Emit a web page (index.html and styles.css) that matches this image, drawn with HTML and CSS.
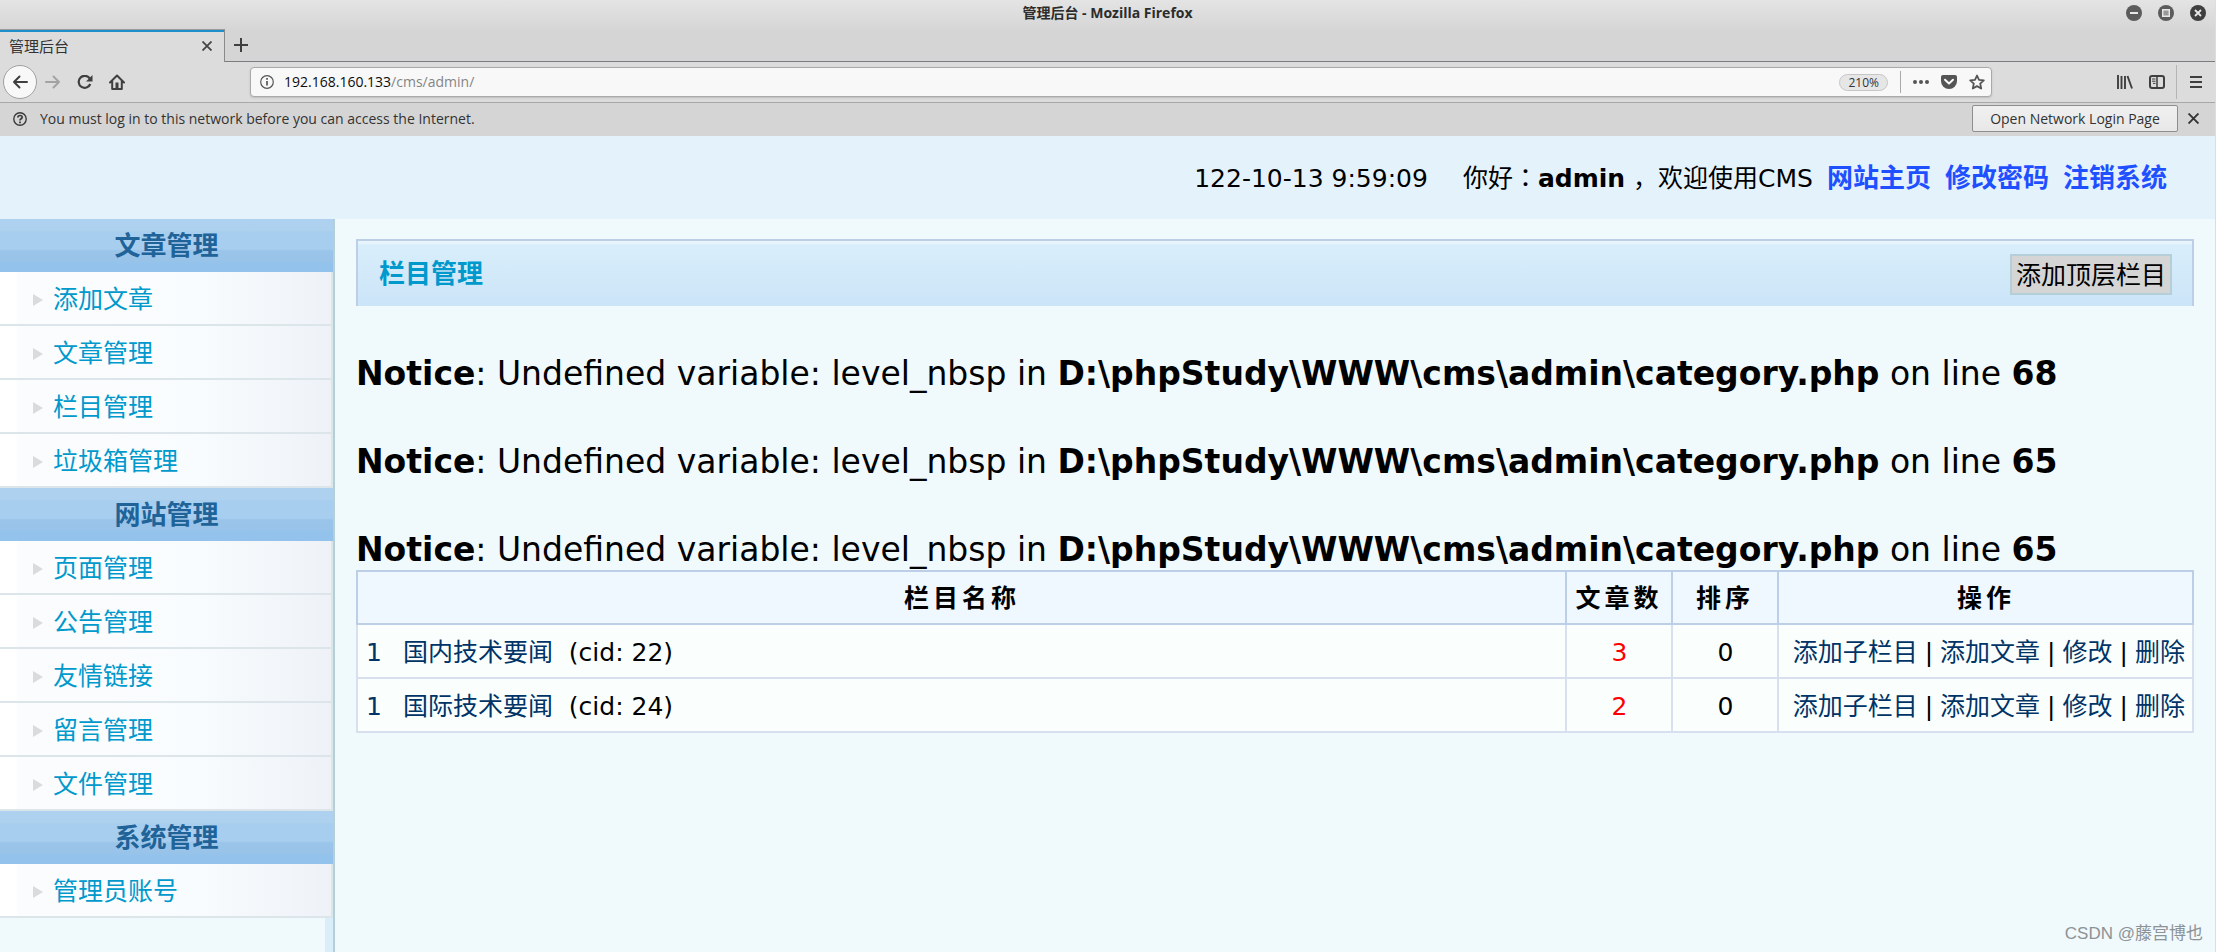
FILE: index.html
```html
<!DOCTYPE html>
<html lang="zh-CN">
<head>
<meta charset="utf-8">
<title>管理后台</title>
<link rel="stylesheet" href="styles.css">
</head>
<body>
<div class="window">
  <header class="chrome">
    <div class="titlebar">
      <span class="window-title">管理后台 - Mozilla Firefox</span>
      <div class="window-buttons">
        <button class="icon-btn" aria-label="Minimize"><svg width="16" height="16" viewBox="0 0 16 16"><circle cx="8" cy="8" r="8" fill="#5c5c5c"/><path d="M4 8h8" stroke="#e8e8e8" stroke-width="2"/></svg></button>
        <button class="icon-btn" aria-label="Maximize"><svg width="16" height="16" viewBox="0 0 16 16"><circle cx="8" cy="8" r="8" fill="#5c5c5c"/><path d="M4.700 4.700h6.600v6.600h-6.600z" fill="#999" stroke="#e8e8e8" stroke-width="1.400"/></svg></button>
        <button class="icon-btn" aria-label="Close"><svg width="16" height="16" viewBox="0 0 16 16"><circle cx="8" cy="8" r="8" fill="#3f3f3f"/><path d="M5 5l6 6M11 5l-6 6" stroke="#e8e8e8" stroke-width="1.800"/></svg></button>
      </div>
    </div>
    <div class="tabs">
      <div class="tab"><span>管理后台</span>
        <button class="icon-btn" aria-label="Close tab"><svg width="10" height="10" viewBox="0 0 10 10"><path d="M.5.500l9 9M9.500.500l-9 9" stroke="#444" stroke-width="1.800"/></svg></button>
      </div>
      <div class="tab-rest"><button class="icon-btn" aria-label="New tab"><svg width="14" height="14" viewBox="0 0 14 14"><path d="M7 0v14M0 7h14" stroke="#3f3f3f" stroke-width="2"/></svg></button></div>
    </div>
    <div class="toolbar">
      <div class="nav">
        <button class="back" aria-label="Back"><svg width="16" height="14" viewBox="0 0 16 14"><path d="M15 7H2M7.500 1.500L2 7l5.500 5.500" fill="none" stroke="#3f3f3f" stroke-width="2" stroke-linecap="round" stroke-linejoin="round"/></svg></button>
        <button class="icon-btn" aria-label="Forward"><svg width="16" height="14" viewBox="0 0 16 14"><path d="M1 7h13M8.500 1.500L14 7l-5.500 5.500" fill="none" stroke="#a3a3a3" stroke-width="2" stroke-linecap="round" stroke-linejoin="round"/></svg></button>
        <button class="icon-btn" aria-label="Reload"><svg width="16" height="14" viewBox="0 0 16 14"><path d="M12.600 3.300A6 6 0 1 0 13.300 9" fill="none" stroke="#3f3f3f" stroke-width="2.200"/><path d="M15.500 0v6.500H9z" fill="#3f3f3f"/></svg></button>
        <button class="icon-btn" aria-label="Home"><svg width="16" height="16" viewBox="0 0 16 16"><path d="M1 8.500L8 1.500l7 7M3.200 7.500V15h9.600V7.500" fill="none" stroke="#3f3f3f" stroke-width="2" stroke-linecap="round" stroke-linejoin="round"/><path d="M6.500 8.500h3V15h-3z" fill="#3f3f3f"/></svg></button>
      </div>
      <div class="urlbar">
        <svg width="14" height="14" viewBox="0 0 14 14"><circle cx="7" cy="7" r="6.300" fill="none" stroke="#555" stroke-width="1.200"/><path d="M7 6v4.500M7 3v1.800" stroke="#555" stroke-width="1.700"/></svg>
        <div class="url"><span class="host">192.168.160.133</span>/cms/admin/</div>
        <button class="zoom">210%</button>
        <i class="url-sep"></i>
        <button class="icon-btn" aria-label="Page actions"><svg width="16" height="14" viewBox="0 0 16 14"><g fill="#555"><circle cx="2" cy="7" r="2"/><circle cx="8" cy="7" r="2"/><circle cx="14" cy="7" r="2"/></g></svg></button>
        <button class="icon-btn" aria-label="Pocket"><svg width="16" height="14" viewBox="0 0 16 14"><path d="M2 0h12a2 2 0 0 1 2 2v4a8 8 0 0 1-16 0V2a2 2 0 0 1 2-2z" fill="#555"/><path d="M4 4.700l4 3.800 4-3.800" fill="none" stroke="#fafafa" stroke-width="2" stroke-linecap="round" stroke-linejoin="round"/></svg></button>
        <button class="icon-btn" aria-label="Bookmark"><svg width="16" height="16" viewBox="0 0 16 16"><path d="M8 1.500l2 4.400 4.800.500-3.600 3.200 1 4.900L8 12.100l-4.200 2.400 1-4.900L1.200 6.400 6 5.900z" fill="none" stroke="#555" stroke-width="1.800" stroke-linejoin="round"/></svg></button>
      </div>
      <div class="tools">
        <button class="icon-btn" aria-label="Library"><svg width="16" height="14" viewBox="0 0 16 14"><path d="M1 0v14M4.500 1v13M8 1v13M10.500 1l4.500 12.500" stroke="#3f3f3f" stroke-width="1.900"/></svg></button>
        <button class="icon-btn" aria-label="Sidebar"><svg width="16" height="14" viewBox="0 0 16 14"><rect x="1" y="1" width="14" height="12" rx="2" fill="none" stroke="#3f3f3f" stroke-width="2"/><path d="M8 1v12" stroke="#3f3f3f" stroke-width="1.500"/><path d="M3 4h3.500M3 6.200h3.500M4 8.400h2.500" stroke="#3f3f3f"/></svg></button>
        <button class="menu" aria-label="Menu"><svg width="12" height="12" viewBox="0 0 12 12"><path d="M0 1h12M0 6h12M0 11h12" stroke="#3f3f3f" stroke-width="2"/></svg></button>
      </div>
    </div>
    <div class="notification">
      <svg width="14" height="14" viewBox="0 0 14 14"><circle cx="7" cy="7" r="6.200" fill="none" stroke="#3a3a3a" stroke-width="1.400"/><path d="M4.900 5.500c0-2.700 4.300-2.600 4.300-.2C9.200 6.900 7 6.700 7 8.500M7 9.500v1.700" fill="none" stroke="#3a3a3a" stroke-width="1.700"/></svg>
      <span class="message">You must log in to this network before you can access the Internet.</span>
      <button class="login-btn">Open Network Login Page</button>
      <button class="icon-btn" aria-label="Dismiss"><svg width="11" height="11" viewBox="0 0 10 10"><path d="M.5.500l9 9M9.500.500l-9 9" stroke="#333" stroke-width="1.700"/></svg></button>
    </div>
  </header>

  <div class="topbar">
    <span class="clock">122-10-13 9:59:09</span>
    <span class="greeting">你好<span lang="ja">：</span><b>admin</b>&nbsp;，欢迎使用CMS</span>
    <nav class="top-links"><a href="#">网站主页</a><a href="#">修改密码</a><a href="#">注销系统</a></nav>
  </div>

  <div class="body">
    <aside class="sidebar">
      <h2>文章管理</h2>
      <ul>
        <li><a href="#">添加文章</a></li>
        <li><a href="#">文章管理</a></li>
        <li><a href="#">栏目管理</a></li>
        <li><a href="#">垃圾箱管理</a></li>
      </ul>
      <h2>网站管理</h2>
      <ul>
        <li><a href="#">页面管理</a></li>
        <li><a href="#">公告管理</a></li>
        <li><a href="#">友情链接</a></li>
        <li><a href="#">留言管理</a></li>
        <li><a href="#">文件管理</a></li>
      </ul>
      <h2>系统管理</h2>
      <ul>
        <li><a href="#">管理员账号</a></li>
      </ul>
    </aside>
    <main class="main">
      <div class="panel-head">
        <h1>栏目管理</h1>
        <button class="add-btn">添加顶层栏目</button>
      </div>
      <div class="notices">
        <p><br><b>Notice</b>: Undefined variable: level_nbsp in <b>D:\phpStudy\WWW\cms\admin\category.php</b> on line <b>68</b></p>
        <p><br><b>Notice</b>: Undefined variable: level_nbsp in <b>D:\phpStudy\WWW\cms\admin\category.php</b> on line <b>65</b></p>
        <p><br><b>Notice</b>: Undefined variable: level_nbsp in <b>D:\phpStudy\WWW\cms\admin\category.php</b> on line <b>65</b></p>
      </div>
      <table class="grid">
        <thead>
          <tr><th>栏目名称</th><th class="col-num">文章数</th><th class="col-num">排序</th><th class="col-ops">操作</th></tr>
        </thead>
        <tbody>
          <tr><td><a class="level" href="#">1</a><a href="#">国内技术要闻</a>&nbsp; (cid: 22)</td><td class="num hot">3</td><td class="num">0</td><td class="ops"><a href="#">添加子栏目</a><span>|</span><a href="#">添加文章</a><span>|</span><a href="#">修改</a><span>|</span><a href="#">删除</a></td></tr>
          <tr><td><a class="level" href="#">1</a><a href="#">国际技术要闻</a>&nbsp; (cid: 24)</td><td class="num hot">2</td><td class="num">0</td><td class="ops"><a href="#">添加子栏目</a><span>|</span><a href="#">添加文章</a><span>|</span><a href="#">修改</a><span>|</span><a href="#">删除</a></td></tr>
        </tbody>
      </table>
      <span class="watermark">CSDN @藤宫博也</span>
    </main>
  </div>
</div>
</body>
</html>
```
FILE: styles.css
```css
* { box-sizing: border-box; }
html { background: #fff; }
body {
  margin: 0;
  padding-right: 3px;
  font: 25px/1.3 "DejaVu Sans", "Noto Sans CJK SC", sans-serif;
  color: #000;
}
a { text-decoration: none; }
button { font: inherit; color: inherit; }
svg { display: block; flex: none; }
h1, h2, p, ul { margin: 0; padding: 0; }
ul { list-style: none; }

.window {
  display: flex;
  flex-direction: column;
  min-height: 100vh;
  box-shadow: 1px 0 0 #dcdce2;
}

/* browser chrome */
.chrome {
  font: 14px/20px "Open Sans", "Noto Sans CJK SC", sans-serif;
  color: #333;
  background: #d5d5d5;
}
.icon-btn {
  display: flex;
  align-items: center;
  justify-content: center;
  padding: 0;
  border: 0;
  background: none;
}
.titlebar {
  display: grid;
  grid-template-columns: 1fr auto 1fr;
  align-items: center;
  height: 29px;
  padding: 0 9px 3px;
  background: linear-gradient(#e4e4e4, #d6d6d6);
}
.window-title {
  grid-column: 2;
  font-weight: 700;
  color: #2c2c2c;
}
.window-buttons {
  display: flex;
  justify-content: flex-end;
  gap: 16px;
}
.tabs { display: flex; height: 33px; }
.tab {
  display: flex;
  align-items: center;
  justify-content: space-between;
  width: 225px;
  padding: 0 12px 0 9px;
  border-top: 1px solid #9a9a9a;
  border-right: 1px solid #8a8a8a;
  background: #dcdcdc;
  box-shadow: inset 0 2px #1d8fcd;
  font-size: 15px;
}
.tab-rest {
  display: flex;
  flex: 1;
  align-items: center;
  padding-left: 9px;
  border-bottom: 1px solid #7c7c80;
}
.toolbar {
  display: flex;
  align-items: center;
  justify-content: space-between;
  height: 41px;
  padding: 0 0 0 3px;
  border-bottom: 1px solid #a8a8a8;
  background: #dcdcdc;
}
.nav { display: flex; align-items: center; gap: 16px; width: 247px; }
.back {
  display: flex;
  align-items: center;
  justify-content: center;
  width: 34px;
  height: 34px;
  margin-right: -8px;
  padding: 0;
  border: 1px solid #a0a0a0;
  border-radius: 50%;
  background: #f8f8f8;
}
.urlbar {
  display: flex;
  flex: 1;
  align-items: center;
  gap: 12px;
  height: 30px;
  padding: 0 6px 0 9px;
  border: 1px solid #a9a9a9;
  border-radius: 4px;
  background: #f8f8f8;
  box-shadow: 0 1px 2px #bdbdbd;
}
.url { flex: 1; margin-left: -2px; color: #858585; }
.host { color: #0c0c0c; }
.zoom {
  height: 17px;
  padding: 0 8px;
  border: 1px solid #c6c6c6;
  border-radius: 9px;
  background: #e6e6e6;
  font-size: 12px;
  line-height: 15px;
}
.url-sep { width: 1px; height: 22px; background: #a9a9a9; }
.tools {
  display: flex;
  align-items: center;
  justify-content: flex-end;
  gap: 16px;
  width: 223px;
}
.menu {
  display: flex;
  align-items: center;
  height: 34px;
  margin-left: -5px;
  padding: 0 13px;
  border: 0;
  border-left: 1px solid #b5b5b5;
  background: none;
}
.notification {
  display: flex;
  align-items: center;
  height: 33px;
  padding: 0 16px 2px 13px;
}
.message { flex: 1; margin-left: 13px; }
.login-btn {
  width: 206px;
  height: 27px;
  margin-right: 10px;
  padding: 0;
  border: 1px solid #8e8e8e;
  border-radius: 2px;
  background: linear-gradient(#f0f0f0, #e8e8e8);
}

/* site header */
.topbar {
  display: flex;
  align-items: center;
  justify-content: flex-end;
  height: 83px;
  padding: 3px 48px 0 0;
  background: #e4f2fc;
}
.greeting {
  margin-left: 35px;
  font-family: "DejaVu Sans", "Noto Sans CJK JP", sans-serif;
}
.top-links { display: flex; gap: 14px; margin-left: 14px; }
.top-links a { font-size: 26px; font-weight: 700; color: #1f50ff; }

.body { display: flex; flex: 1; background: #f0f9fc; }

/* sidebar */
.sidebar {
  flex: none;
  width: 335px;
  border-right: 2px solid #b5cfd9;
  background: linear-gradient(to left, #daeefa 8px, #f0f9fc 8px);
}
.sidebar h2 {
  height: 53px;
  padding-top: 2px;
  font-size: 26px;
  line-height: 51px;
  text-align: center;
  color: #206399;
  background: linear-gradient(#aed1ef 22%, #a7ceee 24%, #a7ceee 57%, #9ac4e9 60%, #99c3e8 78%, #93c3ec 84%);
}
.sidebar li {
  display: flex;
  align-items: center;
  height: 54px;
  padding: 4px 0 0 33px;
  border: solid #dce5ea;
  border-width: 0 2px 2px 0;
  background: linear-gradient(to right, #fff 16px, #fbfcfe 18px, #f9fcfe 60%, #eef1f6);
}
.sidebar li::before {
  content: "";
  margin-right: 10px;
  border: solid transparent;
  border-width: 6px 0 6px 10px;
  border-left-color: #d9dbdd;
}
.sidebar a { color: #0099cc; }

/* content */
.main {
  position: relative;
  flex: 1;
  padding: 20px 21px;
}
.panel-head {
  display: flex;
  align-items: center;
  justify-content: space-between;
  height: 67px;
  padding: 2px 20px 0 21px;
  border: 2px solid #bccfe6;
  border-bottom: 0;
  background: linear-gradient(#e8f5fd 2px, #d8eefb 4px, #cce4f8);
}
.panel-head h1 { font-size: 26px; color: #0099cc; }
.add-btn {
  height: 41px;
  padding: 2px 4px 0;
  border: 2px solid #b5cfd9;
  background: #d5d5d5;
  color: #000;
  line-height: 35px;
}
.notices {
  padding-top: 2px;
  margin-bottom: -2px;
  font-size: 33px;
  line-height: 44px;
}
.grid {
  width: 100%;
  border-collapse: collapse;
  border: 2px solid #bccfe6;
  background: #fafffe;
}
.grid th, .grid td {
  height: 54px;
  padding: 3px 7px 0 8px;
  border: 2px solid #d8e0f0;
  line-height: 32px;
}
.grid th {
  height: 53px;
  border-color: #bccfe6;
  background: #eff7ff;
  letter-spacing: 4px;
}
.grid .col-num { width: 106px; padding: 3px 0 0; }
.grid .col-ops { width: 415px; }
.grid a { color: #003366; }
.grid .level { margin-right: 21px; }
.num { text-align: center; }
.hot { color: #f00; }
.ops { text-align: right; white-space: nowrap; }
.ops span { margin: 0 7px; }
.watermark {
  position: absolute;
  right: 12px;
  bottom: 7px;
  font: 17px/22px "Liberation Sans", "Noto Sans CJK SC", sans-serif;
  color: #8d9296;
}
```
